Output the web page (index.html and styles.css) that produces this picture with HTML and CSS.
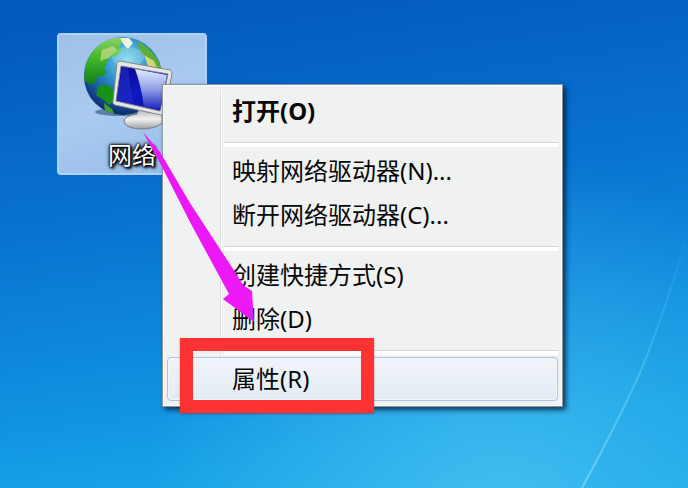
FILE: index.html
```
<!DOCTYPE html>
<html lang="zh-CN">
<head>
    <meta charset="UTF-8">
    <meta name="viewport" content="width=device-width, initial-scale=1.0">
    <title>网络</title>
    <link rel="stylesheet" href="styles.css">
</head>
<body>
    <main class="desktop">
        <svg class="light" viewBox="0 0 688 488" preserveAspectRatio="none" aria-hidden="true">
            <defs>
                <linearGradient id="glow" x1="0" y1="0" x2="0" y2="1">
                    <stop offset="0" stop-color="#6fd0f5" stop-opacity="0"/>
                    <stop offset="1" stop-color="#7fdcf8" stop-opacity=".7"/>
                </linearGradient>
            </defs>
            <path d="M688 230Q672 293 640 373Q614 430 582 488H688Z" fill="#1b9fe8" opacity=".12"/>
            <path d="M688 230Q672 293 640 373Q614 430 582 488" fill="none" stroke="url(#glow)" stroke-width="2"/>
        </svg>

        <button class="shortcut" type="button">
            <svg class="shortcut-icon" viewBox="2 0 96 96" aria-hidden="true">
                <defs>
                    <radialGradient id="sea" cx=".55" cy=".3" r=".7">
                        <stop offset="0" stop-color="#7fd9ee"/>
                        <stop offset=".4" stop-color="#3295cd"/>
                        <stop offset=".8" stop-color="#164f9a"/>
                        <stop offset="1" stop-color="#0b2c68"/>
                    </radialGradient>
                    <linearGradient id="land" x1="0" y1="0" x2="0" y2="1">
                        <stop offset="0" stop-color="#8fd06a"/>
                        <stop offset=".4" stop-color="#43bd2a"/>
                        <stop offset="1" stop-color="#117a1c"/>
                    </linearGradient>
                    <linearGradient id="screen" x1="0" y1="0" x2="1" y2="1">
                        <stop offset="0" stop-color="#08088a"/>
                        <stop offset=".5" stop-color="#1018c0"/>
                        <stop offset="1" stop-color="#0a1096"/>
                    </linearGradient>
                    <linearGradient id="shine" x1="0" y1="0" x2="0" y2="1">
                        <stop offset="0" stop-color="#e4ebff"/>
                        <stop offset=".5" stop-color="#8f9ce8"/>
                        <stop offset="1" stop-color="#1720b8"/>
                    </linearGradient>
                    <linearGradient id="stand" x1="0" y1="0" x2="0" y2="1">
                        <stop offset="0" stop-color="#aab0b4"/>
                        <stop offset=".5" stop-color="#f2f2f0"/>
                        <stop offset="1" stop-color="#9da1a3"/>
                    </linearGradient>
                    <clipPath id="ball"><circle cx="41" cy="39" r="39"/></clipPath>
                </defs>
                <ellipse cx="38" cy="75" rx="25" ry="4" fill="#1e3f6c" opacity=".55"/>
                <circle cx="41" cy="39" r="39" fill="url(#sea)"/>
                <g clip-path="url(#ball)">
                    <path d="M2 43L3 27L8 14Q20 2 36 0L43 3L37 9L40 13L33 20L28 19L25 25L22 31L25 35L20 40L15 39L14 46L8 48Z" fill="url(#land)"/>
                    <path d="M20 13L31 9L35 13L27 21L18 24Z" fill="#cfda8d" opacity=".7"/>
                    <path d="M16 50L23 47L29 50L34 56L33 64L27 68L22 63L14 58Z" fill="#16911c"/>
                    <path d="M22 66L30 72L33 78L23 75Z" fill="#40a12e"/>
                    <path d="M38 1L47 1L51 6L46 12L42 8Z" fill="#ecf3dc"/>
                    <path d="M55 4L66 11L74 20L80 32L72 30L64 19L59 16Z" fill="#5cae35"/>
                    <path d="M62 18L72 24L75 31L66 29Z" fill="#d3d779"/>
                    <ellipse cx="46" cy="20" rx="16" ry="10" fill="#dfffff" opacity=".22"/>
                </g>
                <path d="M57 72L55 77Q42 79 42 84Q42 91 58 92Q74 92 80 86V76Z" fill="url(#stand)" stroke="#777d80"/>
                <path d="M35 26Q35 24 38 24L88 33Q90 34 90 36L83 76Q82 79 79 78L33 68Q30 67 31 64Z" fill="#e6e6e3" stroke="#80868b"/>
                <path d="M39 29L86 37L78 74L34 64Z" fill="url(#screen)" stroke="#7a8190"/>
                <path d="M53 32L85 38L78 73L62 70Q59 48 53 32Z" fill="url(#shine)"/>
                <path d="M40 30L46 31L51 67L35 63Z" fill="#2531c8" opacity=".55"/>
            </svg>
            <span class="shortcut-name">网络</span>
        </button>

        <div class="menu">
            <ul class="menu-list">
                <li><button class="menu-item default" type="button">打开(O)</button></li>
                <li class="separator" role="separator"></li>
                <li><button class="menu-item" type="button">映射网络驱动器(N)...</button></li>
                <li><button class="menu-item" type="button">断开网络驱动器(C)...</button></li>
                <li class="separator" role="separator"></li>
                <li><button class="menu-item" type="button">创建快捷方式(S)</button></li>
                <li><button class="menu-item" type="button">删除(D)</button></li>
                <li class="separator" role="separator"></li>
                <li><button class="menu-item active" type="button">属性(R)</button></li>
            </ul>
            <div class="highlight-box"></div>
        </div>

        <svg class="arrow" viewBox="0 0 114 192" aria-hidden="true">
            <path d="M1 0L18 20L48 71L93 140L101 153L110 159L112 190L81 167L87 162L48 90L18 31Z" fill="#ed18f6"/>
        </svg>
    </main>
</body>
</html>
```
FILE: styles.css
```
* {
    box-sizing: border-box;
}

body {
    margin: 0;
    font-family: "Noto Sans", "Noto Sans CJK SC", sans-serif;
}

button {
    font: inherit;
    border: none;
    cursor: pointer;
}

.desktop {
    position: relative;
    min-height: 100vh;
    overflow: hidden;
    background:
        radial-gradient(ellipse at 72% 105%, rgba(90, 205, 245, 0.6), rgba(90, 205, 245, 0) 50%),
        linear-gradient(172deg, #0459c0 5%, #0871cf 38%, #0e8bdd 65%, #16a0e6 85%, #1daae9 100%);
}

.light {
    position: absolute;
    width: 100%;
    height: 100%;
}

/* desktop shortcut */
.shortcut {
    position: absolute;
    left: 57px;
    top: 33px;
    width: 150px;
    display: flex;
    flex-direction: column;
    align-items: center;
    gap: 8px;
    padding: 2px 8px 4px;
    border: 2px solid #b0d2f5;
    border-radius: 4px;
    background: linear-gradient(160deg, #9fc0e8, #aacaef 50%, #94bcec);
}

.shortcut-icon {
    width: 96px;
    height: 96px;
    overflow: visible;
}

.shortcut-name {
    font-size: 24px;
    line-height: 28px;
    color: #fff;
    text-shadow: 0 0 2px #000, 0 0 3px #000, 1px 1px 2px #000, 2px 2px 3px #000, 0 0 4px #000;
}

/* context menu */
.menu {
    position: absolute;
    left: 162px;
    top: 84px;
    width: 401px;
    padding: 4px 4px 5px;
    border: 1px solid #8d9499;
    background: #f0f1f1;
    box-shadow: inset 0 0 0 1px #fafafa, 3px 3px 5px rgba(0, 20, 50, 0.75);
}

.menu-list {
    margin: 0;
    padding: 0;
    list-style: none;
    background: linear-gradient(90deg, #dedfe0 50%, #fff 50%) 53px 0 / 2px 100% no-repeat;
}

.menu-item {
    display: block;
    width: 100%;
    height: 44px;
    padding: 0 0 0 64px;
    border: 1px solid transparent;
    border-radius: 4px;
    background: none;
    color: #080808;
    font-size: 24px;
    line-height: 40px;
    text-align: left;
}

.menu-item.default {
    font-weight: bold;
}

.menu-item.active {
    border-color: #a9c5df;
    background: linear-gradient(rgba(240, 245, 251, 0.8), rgba(224, 234, 246, 0.8));
    box-shadow: inset 0 0 0 1px #f4f8fd;
}

.separator {
    height: 16px;
    margin-left: 57px;
    padding-top: 9px;
}

.separator::before {
    content: "";
    display: block;
    height: 4px;
    border-top: 1px solid #d2d4d5;
    background: #fff;
}

/* annotations */
.highlight-box {
    position: absolute;
    left: 17px;
    bottom: -7px;
    width: 194px;
    height: 75px;
    border: 13px solid #fd3333;
    box-shadow: 0 1px 2px rgba(150, 30, 30, 0.5);
}

.arrow {
    position: absolute;
    left: 142px;
    top: 132px;
    width: 114px;
    height: 192px;
    pointer-events: none;
}
```
